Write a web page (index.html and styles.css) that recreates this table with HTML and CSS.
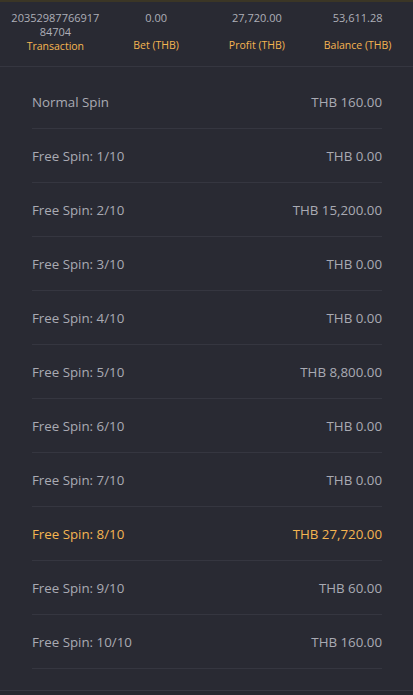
FILE: index.html
```html
<!DOCTYPE html>
<html lang="en">
<head>
    <meta charset="UTF-8">
    <meta name="viewport" content="width=device-width, initial-scale=1.0">
    <title>Spin Details</title>
    <link rel="stylesheet" href="styles.css">
</head>
<body>

    <!-- Summary Section -->
    <div class="summary">
        <div class="cell">
            <span class="value">2035298776691784704</span>
            <span class="label">Transaction</span>
        </div>
        <div class="cell">
            <span class="value">0.00</span>
            <span class="label">Bet (THB)</span>
        </div>
        <div class="cell">
            <span class="value">27,720.00</span>
            <span class="label">Profit (THB)</span>
        </div>
        <div class="cell">
            <span class="value">53,611.28</span>
            <span class="label">Balance (THB)</span>
        </div>
    </div>

    <!-- Spin List -->
    <div class="spins">
        <div class="row"><span>Normal Spin</span><span>THB 160.00</span></div>
        <div class="row"><span>Free Spin: 1/10</span><span>THB 0.00</span></div>
        <div class="row"><span>Free Spin: 2/10</span><span>THB 15,200.00</span></div>
        <div class="row"><span>Free Spin: 3/10</span><span>THB 0.00</span></div>
        <div class="row"><span>Free Spin: 4/10</span><span>THB 0.00</span></div>
        <div class="row"><span>Free Spin: 5/10</span><span>THB 8,800.00</span></div>
        <div class="row"><span>Free Spin: 6/10</span><span>THB 0.00</span></div>
        <div class="row"><span>Free Spin: 7/10</span><span>THB 0.00</span></div>
        <div class="row active"><span>Free Spin: 8/10</span><span>THB 27,720.00</span></div>
        <div class="row"><span>Free Spin: 9/10</span><span>THB 60.00</span></div>
        <div class="row"><span>Free Spin: 10/10</span><span>THB 160.00</span></div>
    </div>

    <div class="bottom"></div>

</body>
</html>
```

FILE: styles.css
```css
/* General */
body {
    margin: 0;
    padding: 0;
    background-color: #292a33;
    font-family: 'Open Sans', 'Noto Sans', sans-serif;
    color: #a9aab3;
    border-top: 2px solid #3b3626;
}

/* Summary */
.summary {
    display: grid;
    grid-template-columns: repeat(4, 1fr);
    padding: 9px 5px 14px;
    border-bottom: 1px solid #353640;
}

.cell {
    display: flex;
    flex-direction: column;
    justify-content: space-between;
    align-items: center;
    height: 41px;
    text-align: center;
    font-size: 11px;
    line-height: 14px;
}

.cell .value {
    width: 94px;
    word-break: break-all;
    color: #aeafb8;
}

.cell .label {
    color: #f5b551;
    font-size: 10.5px;
}

/* Spin list */
.spins {
    padding: 8px 31px 21px 32px;
    border-bottom: 1px solid #353640;
}

.row {
    display: flex;
    justify-content: space-between;
    align-items: center;
    height: 53px;
    border-bottom: 1px solid #353640;
    font-size: 13.3px;
}

.row.active {
    color: #f5b551;
}

.bottom {
    height: 6px;
    background-color: #25262e;
}
```
